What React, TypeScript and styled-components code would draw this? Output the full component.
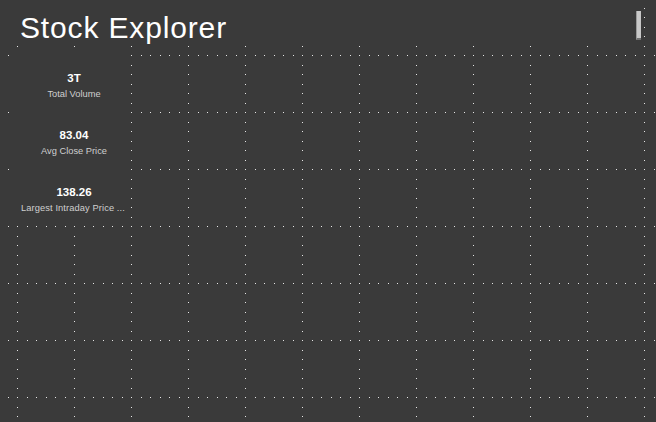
import React from "react";
import styled, { createGlobalStyle } from "styled-components";

const BG = "#3a3a3a";
const DOT = "#e6e6e6";

const GlobalStyle = createGlobalStyle`
  html, body {
    margin: 0;
    padding: 0;
    background: ${BG};
  }
  body {
    font-family: "Liberation Sans", Arial, sans-serif;
  }
`;

/* one 1px dot at the top-left corner of a 57x57 tile */
const dot = `conic-gradient(at 1px 1px, transparent 75%, ${DOT} 0)`;
const hOffsets = [0, 10, 19, 29, 38, 48];
const vOffsets = [10, 19, 29, 38, 48];
const layers = [
  ...hOffsets.map((o) => ({ x: 17 + o, y: 55 })),
  ...vOffsets.map((o) => ({ x: 17, y: 55 + o })),
];

const Canvas = styled.div`
  width: 656px;
  height: 422px;
  overflow: hidden;
  background-color: ${BG};
  background-image: ${layers.map(() => dot).join(", ")};
  background-size: 57px 57px;
  background-position: ${layers.map((l) => `${l.x}px ${l.y}px`).join(", ")};
  display: flex;
  flex-direction: column;
`;

const TitleBar = styled.header`
  width: 642px;
  height: 41px;
  background: ${BG};
  display: flex;
  justify-content: space-between;
  align-items: flex-start;
`;

const Title = styled.h1`
  margin: 0;
  padding: 13px 0 0 20px;
  font-family: "Liberation Sans", Arial, sans-serif;
  font-weight: 400;
  font-size: 30px;
  line-height: 30px;
  letter-spacing: 0.85px;
  color: #ffffff;
  white-space: nowrap;
`;

const ScrollThumb = styled.div`
  box-sizing: border-box;
  width: 5px;
  height: 29px;
  margin: 11px 1px 0 0;
  background: #c8c8c8;
  border-left: 1px solid #9a9a9a;
  border-bottom: 2px solid #707070;
`;

const CardColumn = styled.section`
  margin: 14px 0 0 17px;
  width: 114px;
  display: flex;
  flex-direction: column;
`;

const Card = styled.div`
  box-sizing: border-box;
  height: 57px;
  padding: 16px 4px 0;
  background: ${BG};
  display: flex;
  flex-direction: column;
  align-items: center;
`;

const Value = styled.div`
  font-family: "Liberation Sans", Arial, sans-serif;
  font-weight: 700;
  font-size: 11.5px;
  line-height: 14px;
  color: #ffffff;
`;

const Label = styled.div<{ $truncated?: boolean }>`
  margin-top: 3px;
  font-family: "Liberation Sans", Arial, sans-serif;
  font-size: 9.3px;
  line-height: 12px;
  color: #cfcfcf;
  white-space: nowrap;
  align-self: ${(p) => (p.$truncated ? "stretch" : "center")};
  letter-spacing: ${(p) => (p.$truncated ? "0.1px" : "0")};
`;

const cards = [
  { value: "3T", label: "Total Volume" },
  { value: "83.04", label: "Avg Close Price" },
  { value: "138.26", label: "Largest Intraday Price ...", truncated: true },
];

export default function App() {
  return (
    <>
      <GlobalStyle />
      <Canvas>
        <TitleBar>
          <Title>Stock Explorer</Title>
          <ScrollThumb />
        </TitleBar>
        <CardColumn>
          {cards.map((c) => (
            <Card key={c.label}>
              <Value>{c.value}</Value>
              <Label $truncated={c.truncated}>{c.label}</Label>
            </Card>
          ))}
        </CardColumn>
      </Canvas>
    </>
  );
}
